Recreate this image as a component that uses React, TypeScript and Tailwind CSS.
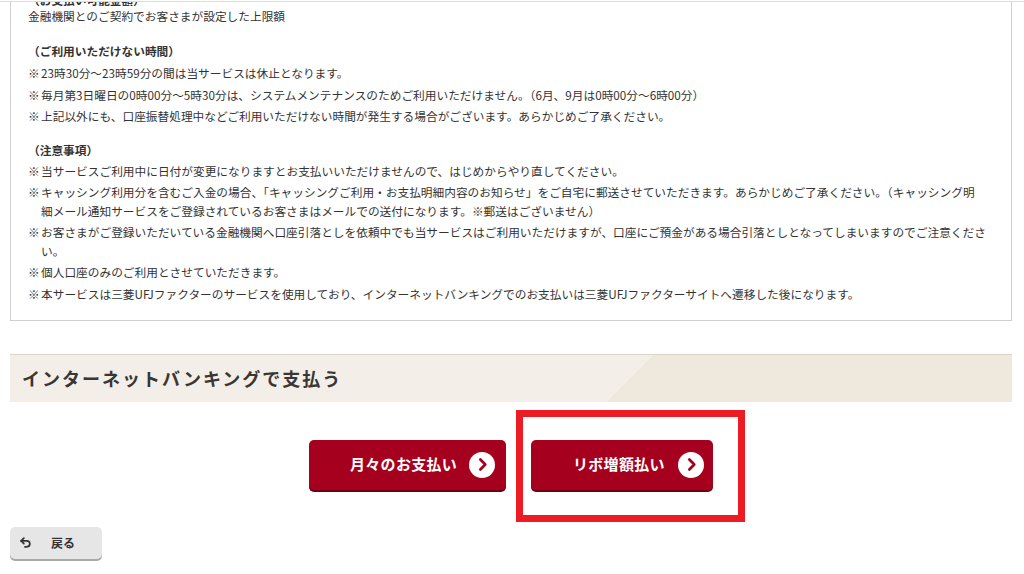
import React from "react";

const Item = ({ children, gap = "mt-[2px]" }: { children: React.ReactNode; gap?: string }) => (
  <div className={`flex leading-[19px] ${gap}`}>
    <span className="w-[13px] shrink-0">※</span>
    <span>{children}</span>
  </div>
);

const Chevron = () => (
  <span className="w-[26px] h-[26px] rounded-full bg-white flex items-center justify-center shrink-0">
    <svg width="15" height="15" viewBox="0 0 14 14" fill="none">
      <path d="M5 2.3 L9.6 7 L5 11.7" stroke="#a4001e" strokeWidth="2.5" strokeLinecap="round" strokeLinejoin="round" />
    </svg>
  </span>
);

export default function App() {
  return (
    <div className="w-[1024px] h-[574px] overflow-hidden bg-white text-[#333] font-['Noto_Sans_CJK_JP','Noto_Sans',sans-serif]">
      <div className="h-px mt-px bg-[#dcdcdc]" />
      <div className="ml-[10px] w-[1002px] border-x border-b border-[#d0d0d0] pl-[17px] pr-[8px] pb-[17px] text-[11.7px] overflow-hidden">
        <div className="h-[4px] relative overflow-hidden">
          <div className="absolute bottom-0 left-0 leading-[12px] font-bold whitespace-nowrap">（お支払い可能金額）</div>
        </div>
        <p className="leading-[19px]">金融機関とのご契約でお客さまが設定した上限額</p>

        <p className="mt-[16px] leading-[19px] font-bold">（ご利用いただけない時間）</p>
        <div className="mt-[1px]">
          <Item gap="mt-[3px]">23時30分～23時59分の間は当サービスは休止となります。</Item>
          <Item gap="mt-[2.5px]">毎月第3日曜日の0時00分～5時30分は、システムメンテナンスのためご利用いただけません。（6月、9月は0時00分～6時00分）</Item>
          <Item gap="mt-[2.5px]">上記以外にも、口座振替処理中などご利用いただけない時間が発生する場合がございます。あらかじめご了承ください。</Item>
        </div>

        <p className="mt-[15px] leading-[19px] font-bold">（注意事項）</p>
        <div className="mt-[2px]">
          <Item>当サービスご利用中に日付が変更になりますとお支払いいただけませんので、はじめからやり直してください。</Item>
          <Item>
            キャッシング利用分を含むご入金の場合、「キャッシングご利用・お支払明細内容のお知らせ」をご自宅に郵送させていただきます。あらかじめご了承ください。（キャッシング明
            <br />
            細メール通知サービスをご登録されているお客さまはメールでの送付になります。※郵送はございません）
          </Item>
          <Item>
            お客さまがご登録いただいている金融機関へ口座引落としを依頼中でも当サービスはご利用いただけますが、口座にご預金がある場合引落としとなってしまいますのでご注意くださ
            <br />
            い。
          </Item>
          <Item>個人口座のみのご利用とさせていただきます。</Item>
          <Item gap="mt-[2.5px]">本サービスは三菱UFJファクターのサービスを使用しており、インターネットバンキングでのお支払いは三菱UFJファクターサイトへ遷移した後になります。</Item>
        </div>
      </div>

      <div className="ml-[10px] mt-[33px] w-[1002px] h-[48px] border-t border-[#ddd5c9] bg-[linear-gradient(135deg,#f3efe8_455px,#efe8dd_455px)] flex items-center pl-[12px]">
        <h2 className="text-[18px] font-bold tracking-[2px] text-[#3a3633] leading-none">インターネットバンキングで支払う</h2>
      </div>

      <div className="mt-[38px] flex justify-center gap-[25px] pr-[2px]">
        <button className="w-[197px] h-[50px] rounded-[5px] bg-[#a6001f] shadow-[0_2px_0_#6d0014] flex items-center pl-[41px] pr-[11px] justify-between">
          <span className="text-white font-bold text-[15px] tracking-[0.3px]">月々のお支払い</span>
          <Chevron />
        </button>
        <div className="relative">
          <button className="w-[182px] h-[50px] rounded-[5px] bg-[#a6001f] shadow-[0_2px_0_#6d0014] flex items-center pl-[42px] pr-[9px] justify-between">
            <span className="text-white font-bold text-[15px] tracking-[0.3px]">リボ増額払い</span>
            <Chevron />
          </button>
          <div className="absolute left-[-15px] top-[-30px] w-[229px] h-[112px] border-[7px] border-[#ed1c24] pointer-events-none" />
        </div>
      </div>

      <button className="ml-[10px] mt-[37px] w-[92px] h-[32px] rounded-[5px] bg-[#e6e6e6] shadow-[0_2px_0_#a9a9a9] flex items-center pl-[9px] gap-[19px]">
        <svg width="13" height="13" viewBox="0 0 24 24" fill="none" stroke="#333" strokeWidth="3.2" strokeLinecap="round" strokeLinejoin="round">
          <path d="M9 14 4 9l5-5" />
          <path d="M4 9h10.5a5.5 5.5 0 0 1 5.5 5.5a5.5 5.5 0 0 1-5.5 5.5H11" />
        </svg>
        <span className="text-[12px] font-bold text-[#333]">戻る</span>
      </button>
    </div>
  );
}
